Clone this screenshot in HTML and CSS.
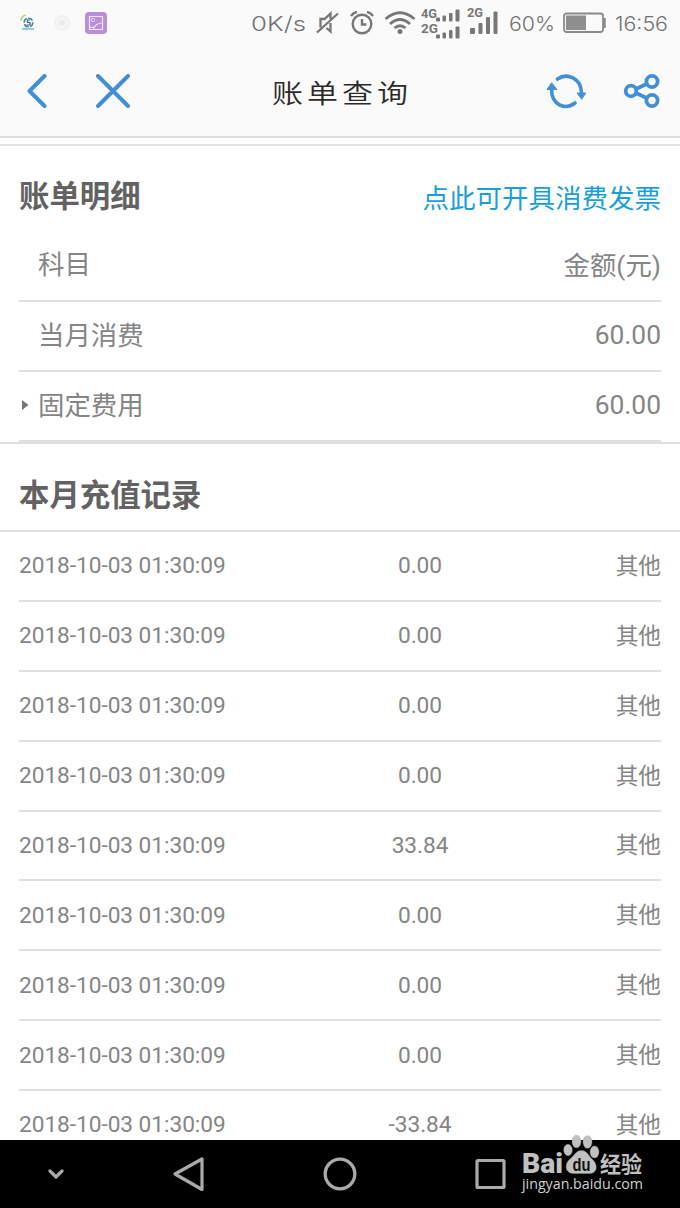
FILE: index.html
```html
<!DOCTYPE html>
<html lang="zh-CN">
<head>
<meta charset="utf-8">
<title>账单查询</title>
<link rel="stylesheet" href="styles.css">
</head>
<body>
<div class="phone">
  <header class="top">
    <div class="status">
      <div class="notices">
        <svg width="16" height="18" viewBox="0 0 16 18" fill="none">
          <path d="M1 7Q1 2 6 1" stroke="#c5cf8c" stroke-width="1.6"/>
          <circle cx="8.500" cy="8.500" r="4.300" stroke="#3e83aa" stroke-width="1.500" stroke-dasharray="5 1.500"/>
          <path d="M10 6H7.500V8.500H10V11H6.500" stroke="#3c657c" stroke-width="1.200"/>
          <path d="M2 15H14" stroke="#93cde9" stroke-width="2"/>
        </svg>
        <svg width="16" height="16" viewBox="0 0 16 16"><circle cx="8" cy="8" r="7" fill="#f5f5f5" stroke="#f0f0f0" stroke-width="2"/><circle cx="8" cy="8" r="3" fill="#ebebeb"/></svg>
        <svg width="22" height="22" viewBox="0 0 22 22" fill="none">
          <rect width="22" height="22" rx="4" fill="#b98edb"/>
          <path d="M4.500 4.500H17.500V17.500H4.500ZM8.500 17Q10.500 11 17 11M5 15.500L9 15" stroke="#f3e4fc" stroke-width="1.200"/>
          <rect x="6.500" y="6.500" width="3" height="3" rx="1" stroke="#f3e4fc"/>
        </svg>
      </div>
      <div class="system">
        <svg width="56" height="22" viewBox="0 0 56 22"><text class="statustext" x="0" y="18.500" textLength="55" lengthAdjust="spacingAndGlyphs">0K/s</text></svg>
        <svg class="mute" width="24" height="24" viewBox="0 0 24 24" fill="none" stroke="#777" stroke-width="2.300">
          <path d="M4.500 16.500V8H8.500L14.500 2.500V8M14.500 12V20.500L10.500 17M1 21.500L22 2.500"/>
        </svg>
        <svg class="alarm" width="24" height="24" viewBox="0 0 24 24" fill="none" stroke="#777" stroke-width="2.400">
          <circle cx="12" cy="13" r="9.300"/><path d="M12 8V13.500H16.500M1 5Q3.500 1.500 7 1M17 1Q20.500 1.500 23 5"/>
        </svg>
        <svg class="wifi" width="32" height="24" viewBox="0 0 32 24" fill="none" stroke="#777" stroke-width="2.700">
          <path d="M1.500 8Q16-4.500 30.500 8M6 13Q16 4 26 13M10.500 17Q16 12.500 21.500 17"/><circle cx="16" cy="20.500" r="2.500" fill="#777" stroke="none"/>
        </svg>
        <svg class="dual" width="40" height="34" viewBox="0 0 40 34" fill="#777">
          <text class="network" x="0" y="11.500" textLength="16" lengthAdjust="spacingAndGlyphs">4G</text>
          <text class="network" x="0" y="26.500" textLength="17" lengthAdjust="spacingAndGlyphs">2G</text>
          <rect x="15" y="11.500" width="4" height="4" rx="1"/><rect x="21.500" y="9.500" width="3.500" height="6" rx="1"/><rect x="28" y="7" width="3.500" height="8.500" rx="1"/><rect x="34.500" y="3.500" width="4" height="12" rx="1"/>
          <rect x="15" y="28.500" width="4" height="4" rx="1"/><rect x="21.500" y="26.500" width="3.500" height="6" rx="1"/><rect x="28" y="24" width="3.500" height="8.500" rx="1"/><rect x="34.500" y="20.500" width="4" height="12" rx="1"/>
        </svg>
        <svg class="single" width="31" height="30" viewBox="0 0 31 30" fill="#777">
          <text class="network" x="0" y="12" textLength="16" lengthAdjust="spacingAndGlyphs">2G</text>
          <rect x="3" y="23" width="5" height="6" rx="1"/><rect x="11.500" y="18" width="4" height="11" rx="1"/><rect x="19" y="12" width="4" height="17" rx="1"/><rect x="26.500" y="6.500" width="4" height="22.500" rx="1"/>
        </svg>
        <svg class="percent" width="47" height="22" viewBox="0 0 47 22"><text class="statustext" x="0" y="18.500" textLength="46" lengthAdjust="spacingAndGlyphs">60%</text></svg>
        <svg class="battery" width="43" height="22" viewBox="0 0 43 22" fill="none">
          <rect x="1" y="1.500" width="39" height="18.500" rx="2.500" stroke="#8a8a8a" stroke-width="1.800"/>
          <rect x="3" y="3.500" width="20" height="14.500" fill="#8e8e8e"/><path d="M41.500 6V16" stroke="#8a8a8a" stroke-width="2.500"/>
        </svg>
        <svg class="clock" width="54" height="22" viewBox="0 0 54 22"><text class="statustext" x="0" y="18.500" textLength="53" lengthAdjust="spacingAndGlyphs">16:56</text></svg>
      </div>
    </div>
    <div class="toolbar">
      <div class="actions left">
        <svg width="20" height="34" viewBox="0 0 20 34" fill="none"><path d="M17.500 2L2.500 17L17.500 32" stroke="#438fd5" stroke-width="4" stroke-linecap="round" stroke-linejoin="round"/></svg>
        <svg width="36" height="34" viewBox="0 0 36 34" fill="none"><path d="M3 2L33 32M33 2L3 32" stroke="#438fd5" stroke-width="4" stroke-linecap="round"/></svg>
      </div>
      <h1 class="title">账单查询</h1>
      <div class="actions right">
        <svg width="40" height="36" viewBox="0 0 40 36" fill="none" stroke="#438fd5" stroke-width="3.600" stroke-linecap="round">
          <path d="M11.500 6C21-.5 35 5 35.500 20M29 30C19 37.500 5.500 32 5.500 16"/><path d="M35.500 26L31 20H39.500ZM5.500 10L1 16.500H10.500Z" fill="#438fd5" stroke-width="1"/>
        </svg>
        <svg width="38" height="36" viewBox="0 0 38 36" fill="none" stroke="#438fd5" stroke-width="3.800">
          <path d="M13 16L23.500 11M13 20L23.500 25"/><circle cx="8" cy="18" r="5.300"/><circle cx="29" cy="8.500" r="5.600"/><circle cx="29" cy="27.500" r="5.600"/>
        </svg>
      </div>
    </div>
  </header>
  <main>
    <section class="bill">
      <div class="billhead"><h2>账单明细</h2><a class="invoice">点此可开具消费发票</a></div>
      <div class="item heading"><span>科目</span><span>金额(元)</span></div>
      <div class="item"><span>当月消费</span><span class="num">60.00</span></div>
      <div class="item"><span class="expand"><svg class="arrow" width="8" height="12" viewBox="0 0 8 12"><path d="M1 1L7.500 6L1 11Z" fill="#777"/></svg>固定费用</span><span class="num">60.00</span></div>
    </section>
    <section class="records">
      <h2>本月充值记录</h2>
      <div class="list">
        <div class="record"><span>2018-10-03 01:30:09</span><span class="amount">0.00</span><span class="kind">其他</span></div>
        <div class="record"><span>2018-10-03 01:30:09</span><span class="amount">0.00</span><span class="kind">其他</span></div>
        <div class="record"><span>2018-10-03 01:30:09</span><span class="amount">0.00</span><span class="kind">其他</span></div>
        <div class="record"><span>2018-10-03 01:30:09</span><span class="amount">0.00</span><span class="kind">其他</span></div>
        <div class="record"><span>2018-10-03 01:30:09</span><span class="amount">33.84</span><span class="kind">其他</span></div>
        <div class="record"><span>2018-10-03 01:30:09</span><span class="amount">0.00</span><span class="kind">其他</span></div>
        <div class="record"><span>2018-10-03 01:30:09</span><span class="amount">0.00</span><span class="kind">其他</span></div>
        <div class="record"><span>2018-10-03 01:30:09</span><span class="amount">0.00</span><span class="kind">其他</span></div>
        <div class="record"><span>2018-10-03 01:30:09</span><span class="amount">-33.84</span><span class="kind">其他</span></div>
      </div>
    </section>
  </main>
  <nav class="navbar">
    <svg class="down" width="16" height="11" viewBox="0 0 16 11" fill="none"><path d="M2 2L8 8L14 2" stroke="#aaa" stroke-width="3.200" stroke-linecap="round"/></svg>
    <svg class="back" width="32" height="36" viewBox="0 0 32 36" fill="none"><path d="M30 3V33.500L3 18Z" stroke="#aaa" stroke-width="3.200" stroke-linejoin="round"/></svg>
    <svg class="home" width="34" height="34" viewBox="0 0 34 34" fill="none"><circle cx="17" cy="17" r="14.800" stroke="#aaa" stroke-width="3.300"/></svg>
    <svg class="recent" width="32" height="32" viewBox="0 0 32 32" fill="none"><rect x="2" y="2.500" width="27" height="27" rx="1" stroke="#aaa" stroke-width="3.200"/></svg>
  </nav>
  <svg class="watermark" width="130" height="66" viewBox="0 0 130 66">
    <text class="brand" x="2" y="38.500" textLength="41" lengthAdjust="spacingAndGlyphs">Bai</text>
    <g fill="#c0c0c0" stroke="#9a9a9a" stroke-width=".4">
      <ellipse cx="48" cy="16" rx="4.300" ry="5.700"/><ellipse cx="56.500" cy="7.500" rx="4.500" ry="6.300"/><ellipse cx="67.500" cy="8" rx="4.500" ry="6.300"/><ellipse cx="74.500" cy="18" rx="4.500" ry="6"/>
      <path d="M61.500 16.500C56 16.500 55 21 50 25C44 30 45 39 53 39.500H70C78 39 78 30 72 25C68 21 67 16.500 61.500 16.500Z"/>
    </g>
    <text class="du" x="52.500" y="36.500" textLength="18" lengthAdjust="spacingAndGlyphs">du</text>
    <text class="experience" x="80" y="37.500" textLength="42" lengthAdjust="spacingAndGlyphs">经验</text>
    <text class="site" x="2" y="55" textLength="121" lengthAdjust="spacingAndGlyphs">jingyan.baidu.com</text>
  </svg>
</div>
</body>
</html>
```

FILE: styles.css
```css
* { box-sizing: border-box; }
body { margin: 0; background: #fff; color: #858585; font-family: Roboto, "Noto Sans CJK SC", sans-serif; }
svg { display: block; flex-shrink: 0; }
h1, h2 { margin: 0; }
.phone { position: relative; width: 680px; height: 1208px; overflow: hidden; display: flex; flex-direction: column; }
.top { height: 138px; flex-shrink: 0; background: #fafafa; border-bottom: 2px solid #dcdcdc; }
.status { height: 45px; display: flex; justify-content: space-between; padding: 0 11px 0 20px; }
.notices { display: flex; align-items: center; }
.notices svg + svg { margin-left: 18px; }
.notices svg:last-child { margin-left: 15px; }
.system { display: flex; align-items: center; }
.statustext { font: 300 20px Inter, sans-serif; fill: #717171; }
.network { font: bold 13px Roboto, sans-serif; }
.mute { margin-left: 9px; }
.alarm { margin-left: 10px; }
.wifi { margin-left: 10px; }
.dual { margin-left: 5px; }
.single { margin-left: 6px; margin-bottom: 5px; }
.percent { margin-left: 11px; }
.battery { margin-left: 7px; }
.clock { margin-left: 9px; }
.toolbar { height: 91px; display: grid; grid-template-columns: 200px 280px 200px; align-items: center; }
.actions { display: flex; align-items: center; }
.left { padding-left: 27px; gap: 48px; }
.right { padding-left: 66px; gap: 37px; }
.title { padding: 2px 0 0 4px; text-align: center; color: #2d2929; font-family: "Noto Sans CJK SC", sans-serif; font-size: 31px; font-weight: 350; line-height: 40px; letter-spacing: 4px; transform: scaleY(.85); }
main { height: 1002px; flex-shrink: 0; overflow: hidden; padding-top: 6px; background: #fff; }
.bill { border-top: 2px solid #e4e4e4; border-bottom: 2px solid #dedede; height: 300px; padding: 0 19px; }
.billhead { height: 85px; padding-top: 17px; display: flex; justify-content: space-between; align-items: center; }
h2 { color: #626262; font-size: 30.400px; font-weight: 700; line-height: 44px; }
.invoice { color: #189fd9; font-size: 26.500px; line-height: 38px; padding-top: 4px; }
.item { height: 70px; padding-left: 19px; border-bottom: 2px solid #dedede; display: flex; align-items: center; justify-content: space-between; font-size: 26.400px; line-height: 38px; }
.heading { height: 71px; }
.item > span:first-child { padding-bottom: 1px; }
.item > .num { padding-bottom: 3px; }
.expand { position: relative; }
.arrow { position: absolute; left: -17px; top: 12px; }
.records h2 { height: 88px; padding: 30px 19px 0; border-bottom: 2px solid #e1e1e1; }
.list { padding: 0 19px; }
.record { height: 69.880px; padding-top: 1px; border-bottom: 2px solid #dfdfdf; display: grid; grid-template-columns: 1fr 160px 1fr; align-items: center; font-size: 22.700px; line-height: 34px; letter-spacing: -.05px; }
.amount { justify-self: center; padding-left: 160px; white-space: nowrap; }
.kind { text-align: right; padding-top: 1px; }
.navbar { height: 68px; background: #000; display: flex; align-items: center; padding-left: 48px; }
.back { margin-left: 108px; }
.home { margin-left: 119px; }
.recent { margin-left: 118px; }
.watermark { position: absolute; left: 520px; top: 1134px; }
.brand { font: 900 28px Roboto, sans-serif; fill: #c0c0c0; }
.du { font: bold 18px "Liberation Sans", sans-serif; fill: #111; }
.experience { font: bold 22px "Noto Sans CJK SC", sans-serif; fill: #c0c0c0; }
.site { font: 15px "Open Sans", sans-serif; fill: #d0d0d0; }
```
